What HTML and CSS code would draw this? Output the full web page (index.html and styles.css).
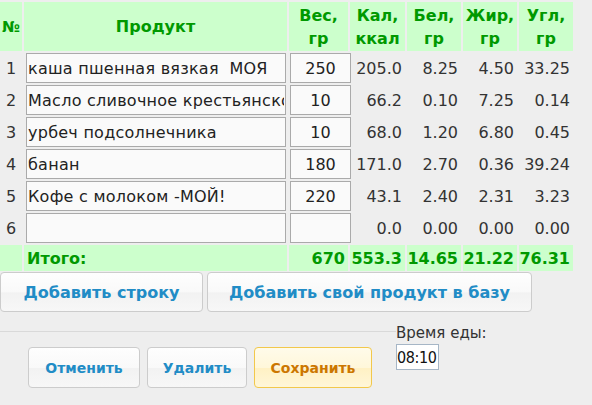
FILE: index.html
```html
<!DOCTYPE html>
<html lang="ru">
<head>
<meta charset="utf-8">
<link rel="stylesheet" href="styles.css">
</head>
<body>
<table class="meal">
  <colgroup>
    <col class="c-num"><col class="c-prod"><col class="c-w"><col class="c-kcal"><col class="c-n"><col class="c-n"><col class="c-n">
  </colgroup>
  <thead>
    <tr class="head">
      <th><span class="numsign">№</span></th>
      <th>Продукт</th>
      <th>Вес,<br>гр</th>
      <th>Кал,<br>ккал</th>
      <th>Бел,<br>гр</th>
      <th>Жир,<br>гр</th>
      <th>Угл,<br>гр</th>
    </tr>
  </thead>
  <tbody>
    <tr class="row">
      <td class="idx">1</td>
      <td><input class="prod" value="каша пшенная вязкая  МОЯ"></td>
      <td><input class="weight" value="250"></td>
      <td class="val">205.0</td><td class="val">8.25</td><td class="val">4.50</td><td class="val">33.25</td>
    </tr>
    <tr class="row">
      <td class="idx">2</td>
      <td><input class="prod" value="Масло сливочное крестьянское"></td>
      <td><input class="weight" value="10"></td>
      <td class="val">66.2</td><td class="val">0.10</td><td class="val">7.25</td><td class="val">0.14</td>
    </tr>
    <tr class="row">
      <td class="idx">3</td>
      <td><input class="prod" value="урбеч подсолнечника"></td>
      <td><input class="weight" value="10"></td>
      <td class="val">68.0</td><td class="val">1.20</td><td class="val">6.80</td><td class="val">0.45</td>
    </tr>
    <tr class="row">
      <td class="idx">4</td>
      <td><input class="prod" value="банан"></td>
      <td><input class="weight" value="180"></td>
      <td class="val">171.0</td><td class="val">2.70</td><td class="val">0.36</td><td class="val">39.24</td>
    </tr>
    <tr class="row">
      <td class="idx">5</td>
      <td><input class="prod" value="Кофе с молоком -МОЙ!"></td>
      <td><input class="weight" value="220"></td>
      <td class="val">43.1</td><td class="val">2.40</td><td class="val">2.31</td><td class="val">3.23</td>
    </tr>
    <tr class="row">
      <td class="idx">6</td>
      <td><input class="prod" value=""></td>
      <td><input class="weight" value=""></td>
      <td class="val">0.0</td><td class="val">0.00</td><td class="val">0.00</td><td class="val">0.00</td>
    </tr>
  </tbody>
  <tfoot>
    <tr class="total">
      <td></td>
      <td class="total-label">Итого:</td>
      <td class="val">670</td><td class="val">553.3</td><td class="val">14.65</td><td class="val">21.22</td><td class="val">76.31</td>
    </tr>
  </tfoot>
</table>

<div class="add-bar">
  <button class="btn btn-add1">Добавить строку</button>
  <button class="btn btn-add2">Добавить свой продукт в базу</button>
</div>

<div class="bottom">
  <div class="actions">
    <button class="btn btn-cancel">Отменить</button>
    <button class="btn btn-delete">Удалить</button>
    <button class="btn btn-save">Сохранить</button>
  </div>
  <div class="time">
    <div class="time-label">Время еды:</div>
    <input class="time-input" value="08:10">
  </div>
</div>
</body>
</html>
```

FILE: styles.css
```css
html, body {
  margin: 0;
  padding: 0;
  background: #eeeeee;
}
body {
  font-family: "DejaVu Sans", Verdana, sans-serif;
  color: #333333;
  width: 592px;
  height: 405px;
  overflow: hidden;
}
.meal {
  table-layout: fixed;
  border-collapse: separate;
  border-spacing: 2px;
  width: 577px;
  margin: 0 0 -1px -2px;
}
.c-num { width: 22px; }
.c-prod { width: 263px; }
.c-w { width: 59px; }
.c-kcal { width: 55px; }
.c-n { width: 54px; }

.head th {
  background: #ccffcc;
  color: #009900;
  font-weight: bold;
  font-size: 16px;
  line-height: 23px;
  height: 49px;
  padding: 0;
  text-align: center;
  vertical-align: middle;
}
.numsign { font-size: 15px; }

.row td {
  height: 30px;
  padding: 0;
  vertical-align: middle;
  font-size: 16px;
  color: #333333;
}
.idx { text-align: center; }
.val {
  text-align: right;
  padding-right: 3px !important;
  white-space: nowrap;
}
input {
  font-family: "DejaVu Sans", Verdana, sans-serif;
  box-sizing: border-box;
  margin: 0;
  outline: none;
}
.prod, .weight {
  display: block;
  height: 30px;
  border: 1px solid #aaaaaa;
  background: #fafafa;
  font-size: 16px;
  color: #222222;
}
.prod {
  width: 260px;
  margin-left: 2px;
  padding: 0 1px;
  letter-spacing: 0.25px;
}
.weight {
  width: 61px;
  margin-left: 1px;
  text-align: center;
  padding: 0;
}

.total td {
  background: #ccffcc;
  color: #009900;
  font-weight: bold;
  font-size: 16px;
  height: 26px;
  padding: 0;
  vertical-align: middle;
}
.total-label {
  padding-left: 3px !important;
}

.btn {
  font-family: "DejaVu Sans", Verdana, sans-serif;
  font-weight: bold;
  font-size: 16px;
  color: #218cc6;
  border: 1px solid #cccccc;
  border-radius: 4px;
  background: linear-gradient(to bottom, #fefefe 0%, #f9f9f9 50%, #f2f2f2 52%, #f7f7f7 100%);
  padding: 0;
  margin: 0;
  cursor: pointer;
}
.add-bar {
  display: flex;
  gap: 4px;
}
.add-bar .btn { height: 40px; }
.btn-add1 { width: 203px; }
.btn-add2 { width: 325px; }

.bottom {
  display: flex;
  margin-top: 19px;
}
.actions {
  width: 368px;
  border-top: 1px solid #d9d9d9;
  padding: 15px 0 0 28px;
  display: flex;
  gap: 7px;
  align-items: flex-start;
}
.actions .btn {
  height: 41px;
  font-size: 14px;
}
.btn-cancel { width: 112px; }
.btn-delete { width: 100px; }
.btn-save {
  width: 118px;
  color: #cc7700;
  border-color: #f2c84b;
  background: linear-gradient(to bottom, #fffbea 0%, #fff7da 50%, #fff1c4 52%, #fff6d8 100%);
}
.time {
  margin-top: -7px;
}
.time-label {
  font-size: 15px;
  line-height: 18px;
  color: #333333;
}
.time-input {
  display: block;
  margin-top: 2px;
  width: 43px;
  height: 26px;
  border: 1px solid #a6b6c6;
  background: #ffffff;
  padding: 0;
  font-family: "DejaVu Sans Condensed", "DejaVu Sans", sans-serif;
  font-stretch: condensed;
  font-size: 16px;
  letter-spacing: -0.4px;
  color: #111111;
}
```
